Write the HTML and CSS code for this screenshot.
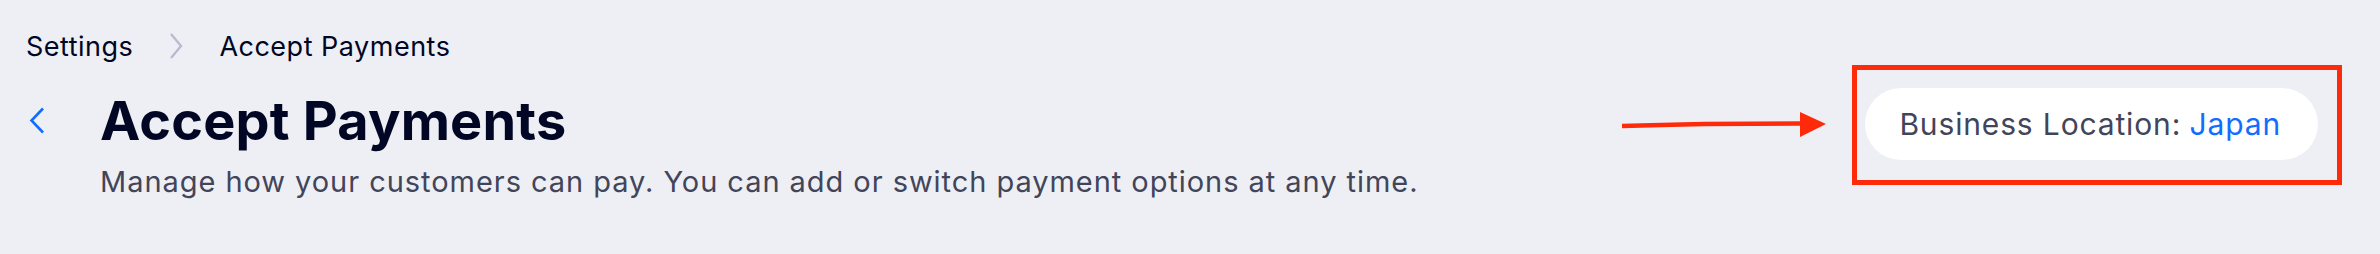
FILE: index.html
```html
<!doctype html>
<html>
<head>
    <meta charset="UTF-8">
    <title>Accept Payments</title>
    <link rel="stylesheet" href="styles.css">
</head>
<body>
    <div id="page">
        <nav class="crumbs">
            <a class="crumb" href="#">Settings</a>
            <svg class="crumb-sep" width="14" height="28" viewBox="0 0 14 28">
                <path d="M2 2 L12 14 L2 26" fill="none" stroke="#b9bbcf" stroke-width="2.4"/>
            </svg>
            <span class="crumb current">Accept Payments</span>
        </nav>

        <div class="heading">
            <div class="title-block">
                <button class="back" title="Back">
                    <svg width="16" height="28" viewBox="0 0 16 28">
                        <path d="M14 1.5 L2.5 13.5 L14 25.5" fill="none" stroke="#116dff" stroke-width="2.6"/>
                    </svg>
                </button>
                <h1>Accept Payments</h1>
                <p class="subtitle">Manage how your customers can pay. You can add or switch payment options at any time.</p>
            </div>

            <div class="annotation">
                <svg class="arrow" width="205" height="30" viewBox="0 0 205 30">
                    <path d="M0 16 C60 14 120 13.5 180 13.5" fill="none" stroke="#ff2a0a" stroke-width="4.5"/>
                    <polygon points="178,2 204,14 178,27" fill="#ff2a0a"/>
                </svg>
                <div class="highlight">
                    <div class="location">Business Location: <a href="#">Japan</a></div>
                </div>
            </div>
        </div>
    </div>
</body>
</html>
```

FILE: styles.css
```css
body {
    margin: 0;
    background-color: #eeeff4;
    color: #000624;
    font-family: Inter, "Noto Sans", sans-serif;
}

#page {
    padding: 0 38px 0 26px;
    height: 254px;
    box-sizing: border-box;
}

.crumbs {
    display: flex;
    align-items: center;
    height: 40px;
    padding-top: 26px;
    font-size: 27px;
    letter-spacing: 0.5px;
}

.crumb {
    color: #000624;
    text-decoration: none;
}

.crumb-sep {
    margin: 0 36px 0 36px;
}

.heading {
    display: flex;
    justify-content: space-between;
    align-items: flex-start;
}

.title-block {
    display: grid;
    grid-template-columns: 74px auto;
    margin-top: 23px;
}

.back {
    background: none;
    border: 0;
    padding: 0 0 0 3px;
    display: flex;
    align-items: center;
    cursor: pointer;
}

h1 {
    margin: 0;
    font-size: 54px;
    font-weight: 700;
    line-height: 64px;
    letter-spacing: 0.2px;
}

.subtitle {
    grid-column: 2;
    margin: 9px 0 0 0;
    font-size: 29px;
    line-height: 40px;
    letter-spacing: 0.95px;
    color: #42455a;
}

.annotation {
    display: flex;
    align-items: center;
    margin-top: -1px;
}

.arrow {
    margin-right: 25px;
}

.highlight {
    border: 5px solid #ff2a0a;
    padding: 18px 19px 20px 8px;
}

.location {
    display: flex;
    align-items: center;
    gap: 0.28em;
    height: 72px;
    padding: 0 37px 0 34px;
    background-color: white;
    border-radius: 36px;
    font-size: 30px;
    letter-spacing: 0.85px;
    color: #42455a;
}

.location a {
    color: #116dff;
    text-decoration: none;
}
```
